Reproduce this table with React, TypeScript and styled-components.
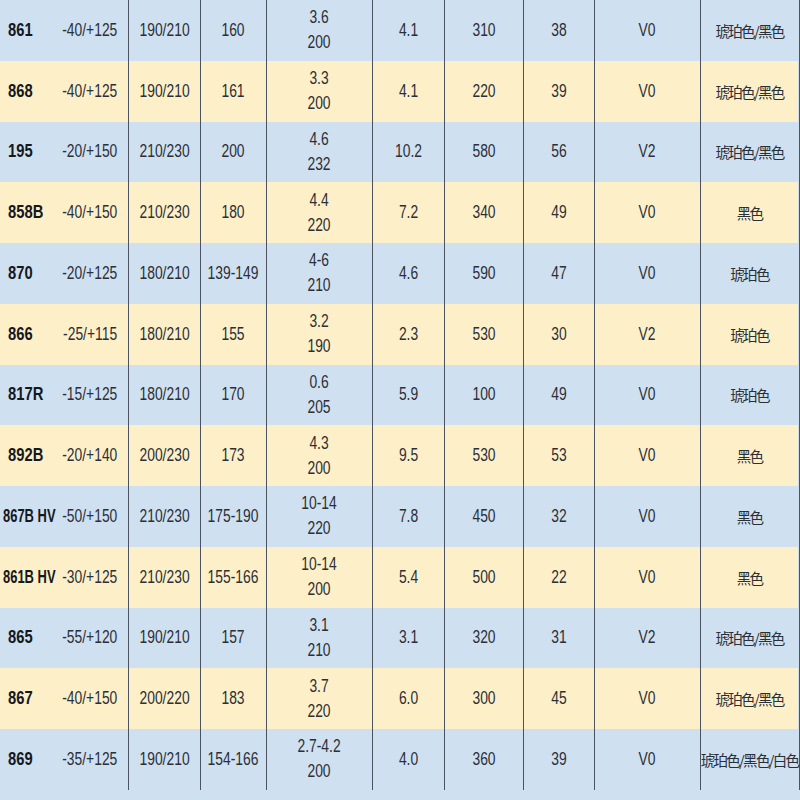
import React from 'react';
import styled, { createGlobalStyle } from 'styled-components';

const GlobalStyle = createGlobalStyle`
  html, body {
    margin: 0;
    padding: 0;
    background: #cfe0f1;
  }
  body {
    font-family: "Liberation Sans", "Noto Sans CJK SC", sans-serif;
    color: #2b2f36;
  }
`;

type Row = {
  name: string;
  temp: string;
  melt: string;
  hdt: string;
  shrink: [string, string];
  ext: string;
  flex: string;
  ti: string;
  ul: string;
  color: string;
};

const rows: Row[] = [
  { name: '861', temp: '-40/+125', melt: '190/210', hdt: '160', shrink: ['3.6', '200'], ext: '4.1', flex: '310', ti: '38', ul: 'V0', color: '琥珀色/黑色' },
  { name: '868', temp: '-40/+125', melt: '190/210', hdt: '161', shrink: ['3.3', '200'], ext: '4.1', flex: '220', ti: '39', ul: 'V0', color: '琥珀色/黑色' },
  { name: '195', temp: '-20/+150', melt: '210/230', hdt: '200', shrink: ['4.6', '232'], ext: '10.2', flex: '580', ti: '56', ul: 'V2', color: '琥珀色/黑色' },
  { name: '858B', temp: '-40/+150', melt: '210/230', hdt: '180', shrink: ['4.4', '220'], ext: '7.2', flex: '340', ti: '49', ul: 'V0', color: '黑色' },
  { name: '870', temp: '-20/+125', melt: '180/210', hdt: '139-149', shrink: ['4-6', '210'], ext: '4.6', flex: '590', ti: '47', ul: 'V0', color: '琥珀色' },
  { name: '866', temp: '-25/+115', melt: '180/210', hdt: '155', shrink: ['3.2', '190'], ext: '2.3', flex: '530', ti: '30', ul: 'V2', color: '琥珀色' },
  { name: '817R', temp: '-15/+125', melt: '180/210', hdt: '170', shrink: ['0.6', '205'], ext: '5.9', flex: '100', ti: '49', ul: 'V0', color: '琥珀色' },
  { name: '892B', temp: '-20/+140', melt: '200/230', hdt: '173', shrink: ['4.3', '200'], ext: '9.5', flex: '530', ti: '53', ul: 'V0', color: '黑色' },
  { name: '867B HV', temp: '-50/+150', melt: '210/230', hdt: '175-190', shrink: ['10-14', '220'], ext: '7.8', flex: '450', ti: '32', ul: 'V0', color: '黑色' },
  { name: '861B HV', temp: '-30/+125', melt: '210/230', hdt: '155-166', shrink: ['10-14', '200'], ext: '5.4', flex: '500', ti: '22', ul: 'V0', color: '黑色' },
  { name: '865', temp: '-55/+120', melt: '190/210', hdt: '157', shrink: ['3.1', '210'], ext: '3.1', flex: '320', ti: '31', ul: 'V2', color: '琥珀色/黑色' },
  { name: '867', temp: '-40/+150', melt: '200/220', hdt: '183', shrink: ['3.7', '220'], ext: '6.0', flex: '300', ti: '45', ul: 'V0', color: '琥珀色/黑色' },
  { name: '869', temp: '-35/+125', melt: '190/210', hdt: '154-166', shrink: ['2.7-4.2', '200'], ext: '4.0', flex: '360', ti: '39', ul: 'V0', color: '琥珀色/黑色/白色' },
];

const Table = styled.div`
  display: grid;
  grid-template-columns: 52px 76px 72px 66px 106px 72px 79px 71px 106px 98px;
  grid-auto-rows: 60.75px;
  width: 799px;
  border-right: 1px solid #4b5260;
`;

const Cell = styled.div<{ $alt: boolean; $ruled?: boolean }>`
  display: flex;
  align-items: center;
  justify-content: center;
  background: ${({ $alt }) => ($alt ? '#fdf0c9' : '#cfe0f1')};
  border-left: ${({ $ruled }) => ($ruled ? '1px solid #4b5260' : 'none')};
  font-size: 18px;
  white-space: nowrap;
  min-width: 0;
`;

const NameCell = styled(Cell)<{ $long: boolean }>`
  justify-content: flex-start;
  padding-left: ${({ $long }) => ($long ? '3px' : '8px')};
`;

// narrow, Calibri-like figures
const Num = styled.span`
  display: inline-block;
  transform: scaleX(0.77);
`;

const Name = styled.span<{ $long: boolean }>`
  display: inline-block;
  font-size: 18px;
  font-weight: bold;
  color: #15181d;
  transform: scaleX(${({ $long }) => ($long ? 0.72 : 0.82)});
  transform-origin: left center;
`;

const Stack = styled.div`
  display: flex;
  flex-direction: column;
  align-items: center;
  line-height: 25px;
  transform: scaleX(0.77);
`;

const ColorText = styled.span`
  font-family: "Noto Sans CJK SC", sans-serif;
  font-size: 14.5px;
  letter-spacing: -1.7px;
`;

export default function App() {
  return (
    <>
      <GlobalStyle />
      <Table>
        {rows.map((r, i) => {
          const alt = i % 2 === 1;
          const long = r.name.length > 5;
          return (
            <React.Fragment key={r.name + i}>
              <NameCell $alt={alt} $long={long}>
                <Name $long={long}>{r.name}</Name>
              </NameCell>
              <Cell $alt={alt}><Num>{r.temp}</Num></Cell>
              <Cell $alt={alt} $ruled><Num>{r.melt}</Num></Cell>
              <Cell $alt={alt} $ruled><Num>{r.hdt}</Num></Cell>
              <Cell $alt={alt} $ruled>
                <Stack>
                  <span>{r.shrink[0]}</span>
                  <span>{r.shrink[1]}</span>
                </Stack>
              </Cell>
              <Cell $alt={alt} $ruled><Num>{r.ext}</Num></Cell>
              <Cell $alt={alt} $ruled><Num>{r.flex}</Num></Cell>
              <Cell $alt={alt} $ruled><Num>{r.ti}</Num></Cell>
              <Cell $alt={alt} $ruled><Num>{r.ul}</Num></Cell>
              <Cell $alt={alt} $ruled>
                <ColorText>{r.color}</ColorText>
              </Cell>
            </React.Fragment>
          );
        })}
      </Table>
    </>
  );
}
